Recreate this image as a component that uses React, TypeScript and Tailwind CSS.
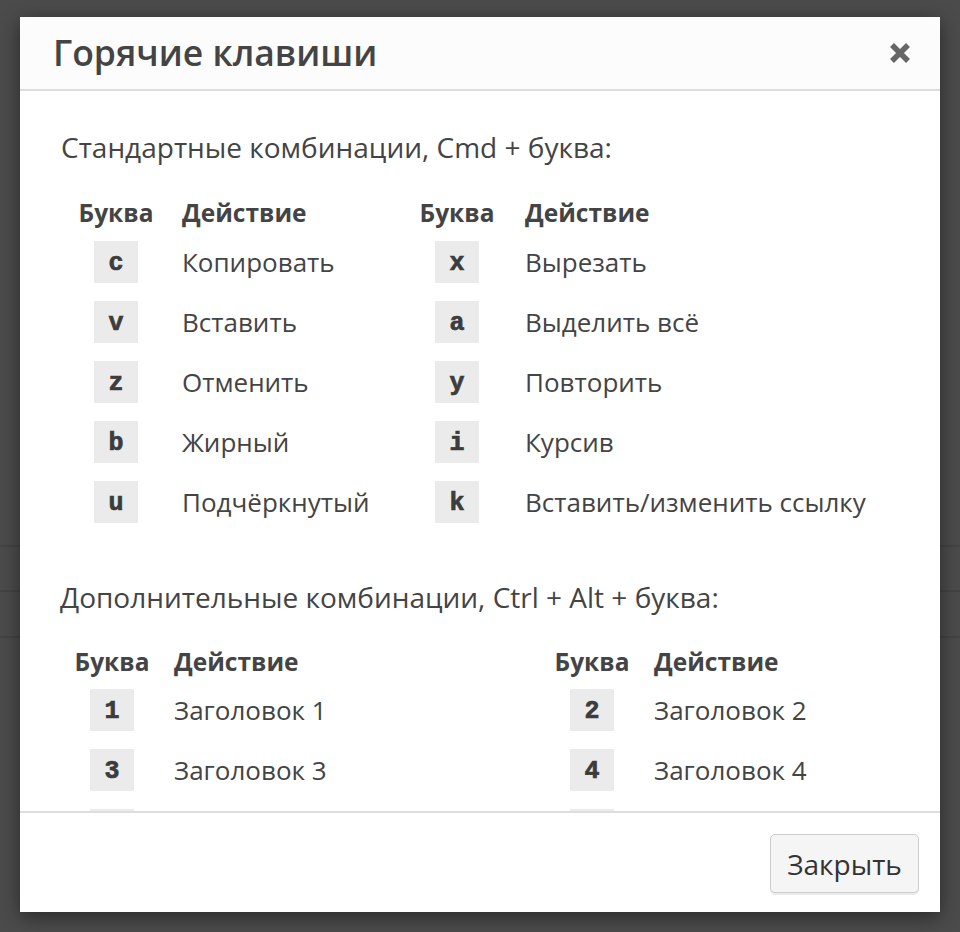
import React from "react";

type Shortcut = { key: string; action: string };

const STANDARD_LEFT: Shortcut[] = [
  { key: "c", action: "Копировать" },
  { key: "v", action: "Вставить" },
  { key: "z", action: "Отменить" },
  { key: "b", action: "Жирный" },
  { key: "u", action: "Подчёркнутый" },
];

const STANDARD_RIGHT: Shortcut[] = [
  { key: "x", action: "Вырезать" },
  { key: "a", action: "Выделить всё" },
  { key: "y", action: "Повторить" },
  { key: "i", action: "Курсив" },
  { key: "k", action: "Вставить/изменить ссылку" },
];

// third row sits under the footer edge, only the top of its key box shows
const EXTRA_LEFT: Shortcut[] = [
  { key: "1", action: "Заголовок 1" },
  { key: "3", action: "Заголовок 3" },
  { key: "", action: "" },
];

const EXTRA_RIGHT: Shortcut[] = [
  { key: "2", action: "Заголовок 2" },
  { key: "4", action: "Заголовок 4" },
  { key: "", action: "" },
];

const ShortcutTable = ({ rows, className }: { rows: Shortcut[]; className: string }) => (
  <div className={className}>
    {/* header row */}
    <div className="flex h-[30px] items-center text-[24.5px] font-bold text-[#444]">
      <div className="flex w-[90px] justify-center">Буква</div>
      <div className="pl-[var(--gap)]">Действие</div>
    </div>
    <div className="mt-[var(--top)] flex flex-col gap-[18px]">
      {rows.map((row, i) => (
        <div key={i} className="flex h-[42px] items-center">
          <div className="flex w-[90px] justify-center">
            <kbd className="flex h-[42px] w-[44px] items-center justify-center bg-[#ebebeb] pt-[4px] font-['Liberation_Mono',monospace] text-[25px] font-bold text-[#3c3c3c] [-webkit-text-stroke:0.7px_#3c3c3c]">
              {row.key}
            </kbd>
          </div>
          <div className="pl-[var(--gap)] text-[26px] text-[#444]">{row.action}</div>
        </div>
      ))}
    </div>
  </div>
);

export default function App() {
  return (
    <div className="relative h-[932px] w-full overflow-hidden bg-[#4b4b4b] font-['Open_Sans',sans-serif]">
      {/* page content dimmed behind the backdrop */}
      <div className="pt-[545px]">
        <div className="h-[45px] border-t-2 border-[#434343]" />
        <div className="h-[46px] border-t-2 border-[#434343]" />
        <div className="border-t-2 border-[#434343]" />
      </div>

      <div className="absolute left-[20px] top-[17px] w-[920px] bg-white shadow-[0_5px_18px_rgba(0,0,0,0.45)]">
        {/* header */}
        <div className="flex h-[74px] items-center justify-between border-b-2 border-[#dddddd] bg-[#fcfcfc] pl-[33px] pr-[29px]">
          <h1 className="text-[35.5px] font-semibold leading-none text-[#444]">Горячие клавиши</h1>
          <button className="text-[#666]" aria-label="Закрыть">
            <svg width="22" height="22" viewBox="0 0 22 22">
              <path d="M3 3 L19 19 M19 3 L3 19" stroke="currentColor" strokeWidth="5.5" />
            </svg>
          </button>
        </div>

        {/* body */}
        <div className="h-[720px] overflow-hidden px-[40px] pt-[41px]">
          <h2 className="ml-[1px] text-[28px] leading-[30px] text-[#444]">
            Стандартные комбинации, Cmd + буква:
          </h2>
          <div className="mt-[36px] flex">
            <ShortcutTable rows={STANDARD_LEFT} className="ml-[11px] w-[341px] [--gap:21px] [--top:13px]" />
            <ShortcutTable rows={STANDARD_RIGHT} className="[--gap:23px] [--top:13px]" />
          </div>

          <h2 className="mt-[59px] text-[28px] leading-[30px] text-[#444]">
            Дополнительные комбинации, Ctrl + Alt + буква:
          </h2>
          <div className="mt-[35px] flex">
            <ShortcutTable rows={EXTRA_LEFT} className="ml-[7px] w-[480px] [--gap:17px] [--top:12px]" />
            <ShortcutTable rows={EXTRA_RIGHT} className="[--gap:17px] [--top:12px]" />
          </div>
        </div>

        {/* footer */}
        <div className="flex h-[101px] justify-end border-t-2 border-[#dddddd] pr-[21px] pt-[21px]">
          <button className="h-[59px] w-[149px] rounded-[5px] border border-[#cccccc] bg-[#f5f5f5] text-[28px] text-[#333] shadow-[0_2px_0_rgba(0,0,0,0.08)]">
            Закрыть
          </button>
        </div>
      </div>
    </div>
  );
}
